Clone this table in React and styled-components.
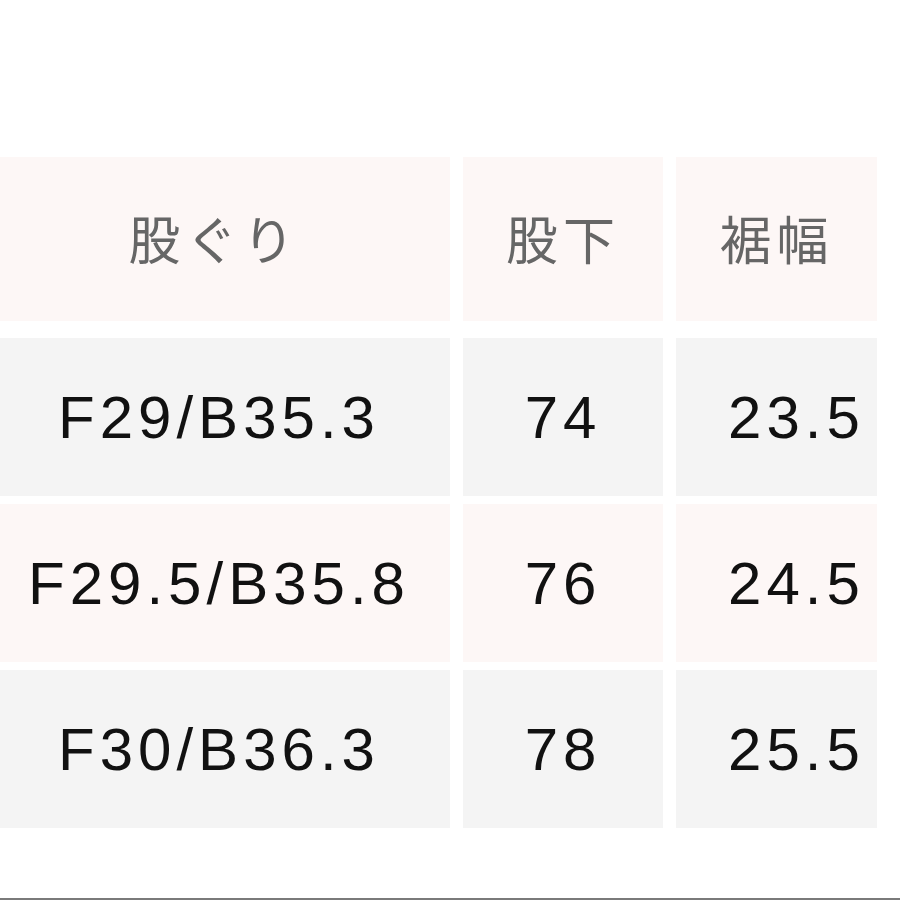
import React from 'react'
import styled, { createGlobalStyle } from 'styled-components'

const GlobalStyle = createGlobalStyle`
  html, body {
    margin: 0;
    padding: 0;
    background: #ffffff;
  }
`

const Page = styled.div`
  box-sizing: border-box;
  width: 900px;
  height: 900px;
  padding-top: 157px;
  background: #ffffff;
  border-bottom: 2px solid #7a7a7a;
  overflow: hidden;
`

const Table = styled.div`
  display: grid;
  grid-template-columns: 450px 200px 201px;
  column-gap: 13px;
  row-gap: 8px;
`

const HeaderCell = styled.div`
  box-sizing: border-box;
  height: 164px;
  margin-bottom: 9px;
  padding-bottom: 4px;
  padding-right: ${p => p.$inset || 0}px;
  display: flex;
  align-items: center;
  justify-content: center;
  background: #fdf7f6;
  color: #666666;
  font-family: 'Noto Sans CJK JP', 'Noto Sans', sans-serif;
  font-size: 52px;
  font-weight: 400;
  letter-spacing: 5px;
`

const Cell = styled.div`
  height: 158px;
  display: flex;
  align-items: center;
  justify-content: center;
  box-sizing: border-box;
  padding-left: ${p => p.$shift || 0}px;
  padding-right: ${p => p.$inset || 0}px;
  background: ${p => (p.$tint ? '#fdf7f6' : '#f4f4f4')};
  color: #111111;
  font-family: 'Liberation Sans', Arial, sans-serif;
  font-size: 60px;
  letter-spacing: 5px;
`

const headers = ['股ぐり', '股下', '裾幅']

const rows = [
  ['F29/B35.3', '74', '23.5'],
  ['F29.5/B35.8', '76', '24.5'],
  ['F30/B36.3', '78', '25.5']
]

const App = () => (
  <React.Fragment>
    <GlobalStyle />
    <Page>
      <Table>
        {headers.map((h, j) => (
          <HeaderCell key={h} $inset={j === 0 ? 22 : 0}>
            {h}
          </HeaderCell>
        ))}
        {rows.map((row, i) =>
          row.map((value, j) => (
            <Cell
              key={`${i}-${j}`}
              $tint={i === 1}
              $shift={j === 2 ? 40 : 0}
              $inset={j === 0 ? 12 : 0}
            >
              {value}
            </Cell>
          ))
        )}
      </Table>
    </Page>
  </React.Fragment>
)

export default App
